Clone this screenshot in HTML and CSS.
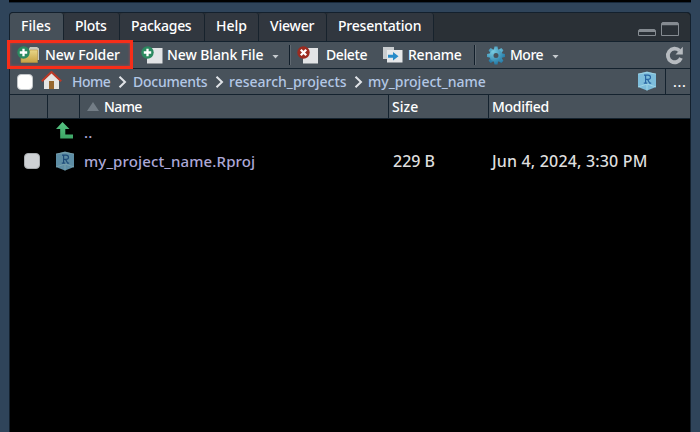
FILE: index.html
```html
<!DOCTYPE html>
<html lang="en">
<head>
<meta charset="utf-8">
<title>Files</title>
<link rel="stylesheet" href="styles.css">
</head>
<body>
<svg class="defs" width="0" height="0" aria-hidden="true">
  <defs>
    <linearGradient id="folder" x2="0" y2="1"><stop stop-color="#e8d688"/><stop offset="1" stop-color="#c7a343"/></linearGradient>
    <radialGradient id="gear" gradientUnits="userSpaceOnUse" cx="-3" cy="-4" r="13"><stop stop-color="#79cbe0"/><stop offset="1" stop-color="#267ca8"/></radialGradient>
    <linearGradient id="up" x2="0" y2="1"><stop stop-color="#58c483"/><stop offset="1" stop-color="#3da566"/></linearGradient>
    <symbol id="plus" viewBox="0 0 13 13"><circle cx="6.5" cy="6.5" r="6.2" fill="#2b8960"/><path d="M6.5 2.8v7.4M2.8 6.5h7.4" stroke="#fff" stroke-width="2.3"/></symbol>
    <symbol id="rproj" viewBox="0 0 20 20"><path d="M10 .5L19 3v13l-9 3.500L1 16V3z" fill="#7dbddb"/><path d="M1 3l9-1.500L19 3M1 16l9-3 9 3M10 13v6.500" fill="none" stroke="#a7dbea" stroke-width=".8"/><path d="M7 4.200h4q2.500 0 2.500 2.100t-2.500 2.100H8.600M8.600 4.200v8M6.800 12.200h3.500M10.700 8.600l2 3.600h1.500" fill="none" stroke="#2865a2" stroke-width="1.200"/></symbol>
  </defs>
</svg>
<div class="upper-pane"></div>
<main class="pane">
  <div class="tabs">
    <div class="tab active t-files">Files</div>
    <div class="tab t-plots">Plots</div>
    <div class="tab t-packages">Packages</div>
    <div class="tab t-help">Help</div>
    <div class="tab t-viewer">Viewer</div>
    <div class="tab t-presentation">Presentation</div>
    <svg class="window-icons" width="42" height="16" viewBox="0 0 42 16" fill="none" stroke="#858b91"><path d="M.5 14.500V10q0-1.500 1.500-1.500h14q1.500 0 1.500 1.500v4.500z"/><path d="M1 10h16" stroke-width="2"/><path d="M23.500 14.500V3q0-1.500 1.500-1.500h14q1.500 0 1.500 1.500v11.500z"/><path d="M24 3h16" stroke-width="2.500"/></svg>
  </div>
  <div class="toolbar">
    <div class="new-folder">
      <svg width="24" height="18" viewBox="0 0 24 18"><path d="M12 2.500l1-1.500h7l2 1.500V14h-2V5h-8z" fill="#c9c8bd"/><path d="M4 6h8l1-2h7.500v12.500H4z" fill="url(#folder)" stroke="#b8923b" stroke-width=".6"/><use href="#plus" width="13" height="13"/></svg>
      <span class="label l-folder">New Folder</span>
    </div>
    <svg class="i-blank" width="22" height="18" viewBox="0 0 22 18"><path d="M6 2h15.500v15.500H6z" fill="#e2e4e6"/><use href="#plus" width="13" height="13"/></svg>
    <span class="label l-blank">New Blank File</span>
    <i class="caret c-blank"></i><i class="separator"></i>
    <svg class="i-delete" width="22" height="18" viewBox="0 0 22 18"><path d="M6 2h15v15.500H6z" fill="#e2e4e6"/><circle cx="6.500" cy="6.500" r="6.200" fill="#9c2b20"/><path d="M3.800 3.800l5.400 5.400M9.200 3.800L3.800 9.200" stroke="#fff" stroke-width="2.300"/></svg>
    <span class="label l-delete">Delete</span>
    <svg class="i-rename" width="20" height="16" viewBox="0 0 20 16"><path d="M0 0h11v12H0z" fill="#c9cdd0"/><path d="M4 3h15.500v12.500H4z" fill="#e6e8ea"/><path d="M5 7.700h5V5l5.500 4.200L10 13.500v-2.700H5z" fill="#278bc9"/></svg>
    <span class="label l-rename">Rename</span><i class="separator s-more"></i>
    <svg class="i-gear" width="18" height="19" viewBox="-9 -9.500 18 19"><g fill="url(#gear)"><path d="M-1.500-9h3L2.200-5.500h-4.400zM-1.500 9h3l.7-3.500h-4.400zM-9-1.500v3l3.500.7v-4.400zM9-1.500v3l-3.500.7v-4.400z"/><path transform="rotate(45)" d="M-1.500-9h3L2.200-5.500h-4.400zM-1.500 9h3l.7-3.500h-4.400zM-9-1.500v3l3.500.7v-4.400zM9-1.500v3l-3.500.7v-4.400z"/><path fill-rule="evenodd" d="M0-6.500A6.500 6.500 0 1 1 0 6.500 6.500 6.500 0 1 1 0-6.500M0-2.500A2.500 2.500 0 1 0 0 2.500 2.500 2.500 0 1 0 0-2.500"/></g></svg>
    <span class="label l-more">More</span><i class="caret c-more"></i>
    <svg class="i-refresh" width="19" height="19" viewBox="0 0 19 19"><path d="M14.500 4.600A6.800 6.800 0 1 0 16 12" fill="none" stroke="#b6bbc0" stroke-width="3.800"/><path d="M17.800.8v7.700h-7.300z" fill="#b6bbc0"/></svg>
  </div>
  <nav class="crumbs">
    <i class="checkbox"></i>
    <svg class="i-home" width="21" height="19" viewBox="0 0 21 19"><path d="M3 9l7.500-7L18 9v9H3z" fill="#e5e5e3"/><path d="M8 10h5v8H8z" fill="#96672f"/><path d="M.8 10.200L10.500 1l9.700 9.200" fill="none" stroke="#bd3926" stroke-width="2"/></svg>
    <span class="label l-home">Home</span><svg class="chev" viewBox="0 0 9 12"><path d="M1.500.7L7 6l-5.500 5.300"/></svg>
    <span class="label l-docs">Documents</span><svg class="chev" viewBox="0 0 9 12"><path d="M1.500.7L7 6l-5.500 5.300"/></svg>
    <span class="label l-research">research_projects</span><svg class="chev" viewBox="0 0 9 12"><path d="M1.500.7L7 6l-5.500 5.300"/></svg>
    <span class="label l-project">my_project_name</span>
    <svg class="i-project" width="20" height="20"><use href="#rproj"/></svg>
    <span class="more-path">...</span>
  </nav>
  <div class="grid head"><div></div><div></div><div class="h-name"><i class="sort"></i><span class="l-name">Name</span></div><div class="h-size">Size</div><div class="h-modified">Modified</div></div>
  <div class="grid row parent"><div></div><div><svg class="i-up" width="18" height="17" viewBox="0 0 18 17"><path d="M6.500 0L13.500 7H9.300v5.500H17V16.500H4.200V7H0z" fill="url(#up)"/></svg></div><div class="name">..</div></div>
  <div class="grid row file"><div><i class="checkbox dim"></i></div><div><svg class="i-file" width="20" height="20"><use href="#rproj"/></svg></div><div class="name l-file">my_project_name.Rproj</div><div class="size">229 B</div><div class="modified">Jun 4, 2024, 3:30 PM</div></div>
</main>
</body>
</html>
```

FILE: styles.css
```css
* { box-sizing: border-box; }
body { margin: 0; width: 700px; height: 432px; overflow: hidden; background: #2f445a; color: #fff; font: 500 14px/20px "Noto Sans", sans-serif; }
.defs { position: absolute; }
svg { display: block; flex: none; }
i { display: block; flex: none; }
.upper-pane { width: 682px; height: 3px; margin-left: 9px; background: #000; border-bottom: 1px solid #17283a; }
.pane { width: 682px; height: 423px; margin: 9px 0 0 9px; border: 1px solid #13202d; border-bottom: 0; border-radius: 4px 4px 0 0; background: #000; }
.tabs { display: flex; height: 29px; background: #2a3036; border-bottom: 1px solid #14222e; border-radius: 3px 3px 0 0; }
.tab { flex: none; height: 28px; padding: 3px 0 0 11px; background: #31373f; border-right: 1px solid #17222c; border-radius: 3px 3px 0 0; white-space: nowrap; }
.tab.active { height: 29px; background: #465059; }
.t-files { width: 54px; }
.t-plots { width: 56px; letter-spacing: -.3px; }
.t-packages { width: 85px; letter-spacing: -.3px; }
.t-help { width: 54px; }
.t-viewer { width: 68px; letter-spacing: -.2px; }
.t-presentation { width: 107px; letter-spacing: -.2px; }
.window-icons { margin: 8px 0 0 204px; }
.toolbar { display: flex; height: 27px; background: #48525b; border-bottom: 1px solid #14222e; align-items: center; }
.label { flex: none; white-space: nowrap; }
.new-folder { display: flex; flex: none; align-items: center; width: 126px; height: 29px; margin: -1px 0 0 -3px; border: 3px solid #f72e19; box-shadow: inset 0 0 3px #ab434b; padding-left: 7px; position: relative; z-index: 1; }
.l-folder { margin-left: 4px; width: 80px; letter-spacing: -.1px; }
.i-blank { margin-left: 8px; }
.l-blank { margin-left: 4px; width: 105px; letter-spacing: -.1px; }
.caret { width: 7px; height: 4px; margin-top: 3px; background: #c5cace; clip-path: polygon(0 0, 100% 0, 50% 100%); }
.separator { width: 2px; height: 20px; margin-left: 10px; background: linear-gradient(90deg, #111e2a 50%, #606971 50%); }
.i-delete { margin-left: 6px; }
.l-delete { margin-left: 7px; width: 57px; letter-spacing: -.4px; }
.l-rename { margin-left: 5px; width: 56px; letter-spacing: -.25px; }
.s-more { margin-left: 10px; }
.i-gear { margin-left: 11px; }
.l-more { margin-left: 5px; width: 42px; letter-spacing: -.5px; }
.i-refresh { margin-left: auto; margin-right: 6px; }
.crumbs { display: flex; height: 26px; align-items: center; background: #48525b; border-bottom: 1px solid #14222e; color: #b3c7e5; }
.checkbox { width: 16px; height: 16px; margin-left: 7px; border-radius: 4px; background: #fff; border: 1px solid #c1c5c8; }
.dim { margin: 4px 0 0 14px; background: #ced1d4; border-color: #a7abae; }
.i-home { margin-left: 8px; margin-top: -3px; }
.l-home { margin-left: 10px; width: 46px; letter-spacing: -.5px; }
.l-docs { margin-left: 6px; width: 82px; letter-spacing: -.25px; }
.l-research { margin-left: 5px; width: 125px; }
.l-project { margin-left: 5px; width: 124px; }
.chev { width: 9px; height: 12px; fill: none; stroke: #e0e3e7; stroke-width: 2; }
.i-project { margin-left: auto; margin-right: 8px; margin-top: -2px; }
.more-path { width: 25px; height: 25px; flex: none; padding: 3px 0 0 7px; border-left: 1px solid #14222e; color: #fff; letter-spacing: .7px; }
.grid { display: grid; grid-template-columns: 38px 32px 309px 100px 201px; }
.head { height: 24px; background: #48525b; border-bottom: 1px solid #14222e; }
.head > div { border-right: 1px solid #14222e; padding: 2px 0 0 3px; }
.head > div:last-child { border-right: 0; letter-spacing: -.3px; }
.h-name { display: flex; letter-spacing: -.6px; }
.sort { width: 12px; height: 9px; margin: 5px 0 0 4px; background: #737d86; clip-path: polygon(50% 0, 100% 100%, 0 100%); }
.l-name { margin-left: 5px; }
.row { color: #dedede; font-size: 15px; }
.parent { height: 28px; padding-top: 3px; }
.file { height: 30px; padding-top: 2px; line-height: 25px; }
.name { color: #ada8d7; padding-left: 4px; letter-spacing: .14px; }
.size { padding-left: 4px; font-size: 16px; }
.modified { padding-left: 3px; white-space: nowrap; font-size: 16px; letter-spacing: .17px; }
.i-up { margin-left: 8px; }
.i-file { margin: 2px 0 0 7px; opacity: .75; }
```
